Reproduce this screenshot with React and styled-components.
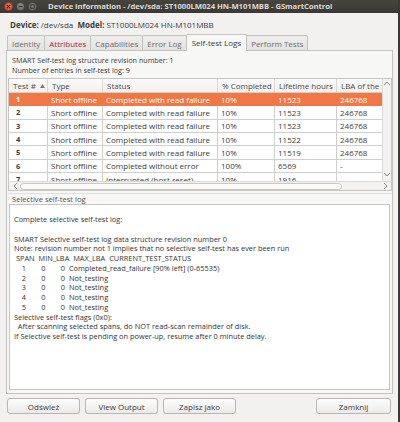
import React from "react";
import styled, { createGlobalStyle, css } from "styled-components";

const Global = createGlobalStyle`
  html, body { margin: 0; padding: 0; }
  body {
    background: #f2f1f0;
    font-family: "Open Sans", "DejaVu Sans", sans-serif;
    font-size: 8px;
    color: #3c3c3c;
  }
  * { box-sizing: border-box; }
`;

const Window = styled.div`
  width: 400px;
  height: 422px;
  display: flex;
  flex-direction: column;
  background: #f2f1f0;
  border-right: 2px solid #3a3935;
  overflow: hidden;
`;

const TitleBar = styled.div`
  height: 13px;
  flex: none;
  display: flex;
  align-items: center;
  background: linear-gradient(#45443f, #3a3935);
  padding-left: 4px;
  gap: 3px;
`;

const WinButton = styled.div`
  width: 9px;
  height: 9px;
  border-radius: 50%;
  flex: none;
  display: flex;
  align-items: center;
  justify-content: center;
  background: ${(p) => (p.$close ? "radial-gradient(circle at 50% 35%, #f27c5b, #d9492a)" : "radial-gradient(circle at 50% 35%, #8d8c86, #6a6964)")};
  border: 1px solid ${(p) => (p.$close ? "#a9391f" : "#4d4c48")};
`;

const TitleText = styled.div`
  margin-left: 8px;
  color: #dfdbd2;
  font-weight: 700;
  font-size: 7.7px;
  letter-spacing: -0.05px;
  white-space: nowrap;
  line-height: 13px;
`;

const Body = styled.div`
  flex: 1;
  display: flex;
  flex-direction: column;
  padding: 0 5px 0 6px;
`;

const DeviceLine = styled.div`
  margin-top: 7px;
  height: 10px;
  line-height: 10px;
  padding-left: 4px;
  white-space: nowrap;
  b { font-weight: 700; }
`;

const TabRow = styled.div`
  margin-top: 4px;
  height: 16px;
  display: flex;
  align-items: flex-end;
  padding-left: 1px;
  position: relative;
  z-index: 1;
`;

const Tab = styled.div`
  height: ${(p) => (p.$active ? 16 : 15)}px;
  padding: 0 ${(p) => (p.$active ? 5 : 4)}px;
  display: flex;
  align-items: center;
  justify-content: center;
  white-space: nowrap;
  border: 1px solid #c4c2bd;
  border-bottom: none;
  margin-right: -1px;
  border-radius: 2px 2px 0 0;
  color: ${(p) => (p.$warn ? "#b0262b" : p.$active ? "#3c3c3c" : "#6b6b6b")};
  background: ${(p) => (p.$active ? "#f7f7f6" : "linear-gradient(#efeeed, #e4e2e0)")};
  ${(p) => p.$active && css`margin-bottom: -1px; height: 17px; padding-bottom: 1px;`}
`;

const Panel = styled.div`
  flex: none;
  height: 344px;
  border: 1px solid #c4c2bd;
  background: #f7f7f6;
  display: flex;
  flex-direction: column;
  padding: 0 0 0 1px;
`;

const InfoLine = styled.div`
  height: 10px;
  line-height: 10px;
  padding-left: 4px;
  font-size: 7.2px;
  white-space: nowrap;
  &:first-child { margin-top: 4px; }
`;

const TableWrap = styled.div`
  margin-top: 3px;
  height: 103px;
  display: flex;
  border: 1px solid #c7c5c2;
  border-bottom: none;
  background: #fff;
  overflow: hidden;
`;

const Grid = styled.div`
  flex: 1;
  display: flex;
  flex-direction: column;
  overflow: hidden;
`;

const cols = "39px 55px 115px 57px 62px 48px";

const HeaderRow = styled.div`
  display: grid;
  grid-template-columns: ${cols};
  height: 14px;
  flex: none;
  background: linear-gradient(#fbfbfb, #f1f0ef);
  border-bottom: 1px solid #d3d1ce;
`;

const HeadCell = styled.div`
  display: flex;
  align-items: center;
  gap: 4px;
  padding-left: 4px;
  white-space: nowrap;
  overflow: hidden;
  border-right: 1px solid #dcdad7;
  color: #4a4a4a;
`;

const Row = styled.div`
  display: grid;
  grid-template-columns: ${cols};
  height: 13.33px;
  flex: none;
  background: ${(p) => (p.$sel ? "#f07746" : "#fff")};
  color: ${(p) => (p.$sel ? "#fff" : "#3c3c3c")};
  border-bottom: 1px solid ${(p) => (p.$sel ? "#f07746" : "#cfcfcf")};
`;

const Cell = styled.div`
  display: flex;
  align-items: center;
  padding-left: ${(p) => (p.$num ? 7 : 3)}px;
  white-space: nowrap;
  overflow: hidden;
  font-weight: ${(p) => (p.$num ? 700 : 400)};
  font-size: ${(p) => (p.$num ? 7.5 : 8)}px;
  border-right: 1px solid ${(p) => (p.$sel ? "#f07746" : "#cfcfcf")};
`;

const VScroll = styled.div`
  width: 9px;
  flex: none;
  background: #f3f2f1;
  border-left: 1px solid #dcdad7;
  display: flex;
  flex-direction: column;
  justify-content: space-between;
  align-items: center;
  padding: 2px 0 4px;
`;

const HScroll = styled.div`
  height: 10px;
  flex: none;
  border: 1px solid #c7c5c2;
  border-top: 1px solid #dcdad7;
  background: #f3f2f1;
  display: flex;
  align-items: center;
  padding: 0 3px 0 4px;
  gap: 2px;
`;

const HThumb = styled.div`
  flex: none;
  width: 322px;
  height: 7px;
  border: 1px solid #c9c7c3;
  border-radius: 4px;
  background: #fafaf9;
`;

const Spacer = styled.span`
  flex: 1;
`;

const Separator = styled.div`
  height: 3px;
  flex: none;
  border-bottom: 1px solid #e0dfdd;
`;

const FrameLabel = styled.div`
  height: 10px;
  line-height: 10px;
  padding-left: 4px;
  font-size: 7.6px;
  color: #555;
`;

const TextView = styled.div`
  height: 186px;
  margin: 0 2px 0 1px;
  border: 1px solid #c7c5c2;
  background: #fff;
  padding: 10px 0 0 4px;
  white-space: pre;
  font-size: 7.4px;
  line-height: 9.75px;
  color: #333;
  overflow: hidden;
`;

const ButtonBar = styled.div`
  flex: none;
  display: flex;
  padding: 0 0 0 1px;
  margin-top: 4px;
  gap: 5px;
`;

const Button = styled.div`
  width: ${(p) => p.$w}px;
  height: 16px;
  display: flex;
  align-items: center;
  justify-content: center;
  border: 1px solid #b9b7b3;
  border-radius: 3px;
  background: linear-gradient(#fdfdfd, #ebeae9);
  color: #3c3c3c;
  white-space: nowrap;
  ${(p) => p.$right && css`margin-left: auto; margin-right: 2px;`}
`;

const Arrow = ({ dir }) => {
  const pts = {
    up: "0,4 3,1 6,4",
    down: "0,1 3,4 6,1",
    left: "4,0 1,3 4,6",
    right: "1,0 4,3 1,6",
  }[dir];
  const horiz = dir === "left" || dir === "right";
  return (
    <svg width={horiz ? 5 : 6} height={horiz ? 6 : 5} viewBox={horiz ? "0 0 5 6" : "0 0 6 5"}>
      <polyline points={pts} fill="none" stroke="#8a8884" strokeWidth="1" />
    </svg>
  );
};

const SortArrow = () => (
  <svg width="5" height="4" viewBox="0 0 5 4">
    <polygon points="0,4 2.5,0 5,4" fill="#777" />
  </svg>
);

const rows = [
  ["1", "Short offline", "Completed with read failure", "10%", "11523", "246768"],
  ["2", "Short offline", "Completed with read failure", "10%", "11523", "246768"],
  ["3", "Short offline", "Completed with read failure", "10%", "11523", "246768"],
  ["4", "Short offline", "Completed with read failure", "10%", "11522", "246768"],
  ["5", "Short offline", "Completed with read failure", "10%", "11519", "246768"],
  ["6", "Short offline", "Completed without error", "100%", "6569", "-"],
  ["7", "Short offline", "Interrupted (host reset)", "10%", "1916", "-"],
];

const logText = `Complete selective self-test log:

SMART Selective self-test log data structure revision number 0
Note: revision number not 1 implies that no selective self-test has ever been run
 SPAN  MIN_LBA  MAX_LBA  CURRENT_TEST_STATUS
    1        0        0  Completed_read_failure [90% left] (0-65535)
    2        0        0  Not_testing
    3        0        0  Not_testing
    4        0        0  Not_testing
    5        0        0  Not_testing
Selective self-test flags (0x0):
  After scanning selected spans, do NOT read-scan remainder of disk.
If Selective self-test is pending on power-up, resume after 0 minute delay.`;

export default function App() {
  return (
    <>
      <Global />
      <Window>
        <TitleBar>
          <WinButton $close>
            <svg width="5" height="5" viewBox="0 0 5 5">
              <path d="M0.8 0.8 L4.2 4.2 M4.2 0.8 L0.8 4.2" stroke="#5a1a0c" strokeWidth="1.1" />
            </svg>
          </WinButton>
          <WinButton>
            <svg width="5" height="5" viewBox="0 0 5 5">
              <path d="M0.5 2.5 H4.5" stroke="#35342f" strokeWidth="1.2" />
            </svg>
          </WinButton>
          <WinButton>
            <svg width="5" height="5" viewBox="0 0 5 5">
              <rect x="0.8" y="0.8" width="3.4" height="3.4" fill="none" stroke="#35342f" strokeWidth="1" />
            </svg>
          </WinButton>
          <TitleText>Device Information - /dev/sda: ST1000LM024 HN-M101MBB - GSmartControl</TitleText>
        </TitleBar>
        <Body>
          <DeviceLine>
            <b>Device:</b> /dev/sda&nbsp; <b>Model:</b> ST1000LM024 HN-M101MBB
          </DeviceLine>
          <TabRow>
            <Tab>Identity</Tab>
            <Tab $warn>Attributes</Tab>
            <Tab>Capabilities</Tab>
            <Tab>Error Log</Tab>
            <Tab $active>Self-test Logs</Tab>
            <Tab>Perform Tests</Tab>
          </TabRow>
          <Panel>
            <InfoLine>SMART Self-test log structure revision number: 1</InfoLine>
            <InfoLine>Number of entries in self-test log: 9</InfoLine>
            <TableWrap>
              <Grid>
                <HeaderRow>
                  <HeadCell>
                    Test # <SortArrow />
                  </HeadCell>
                  <HeadCell>Type</HeadCell>
                  <HeadCell>Status</HeadCell>
                  <HeadCell>% Completed</HeadCell>
                  <HeadCell>Lifetime hours</HeadCell>
                  <HeadCell>LBA of the first error</HeadCell>
                </HeaderRow>
                {rows.map((r, i) => (
                  <Row key={r[0]} $sel={i === 0}>
                    {r.map((c, j) => (
                      <Cell key={j} $num={j === 0} $sel={i === 0}>
                        {c}
                      </Cell>
                    ))}
                  </Row>
                ))}
              </Grid>
              <VScroll>
                <Arrow dir="up" />
                <Arrow dir="down" />
              </VScroll>
            </TableWrap>
            <HScroll>
              <Arrow dir="left" />
              <HThumb />
              <Spacer />
              <Arrow dir="right" />
            </HScroll>
            <Separator />
            <FrameLabel>Selective self-test log</FrameLabel>
            <TextView>{logText}</TextView>
          </Panel>
          <ButtonBar>
            <Button $w={73}>Odśwież</Button>
            <Button $w={73}>View Output</Button>
            <Button $w={73}>Zapisz jako</Button>
            <Button $w={75} $right>
              Zamknij
            </Button>
          </ButtonBar>
        </Body>
      </Window>
    </>
  );
}
